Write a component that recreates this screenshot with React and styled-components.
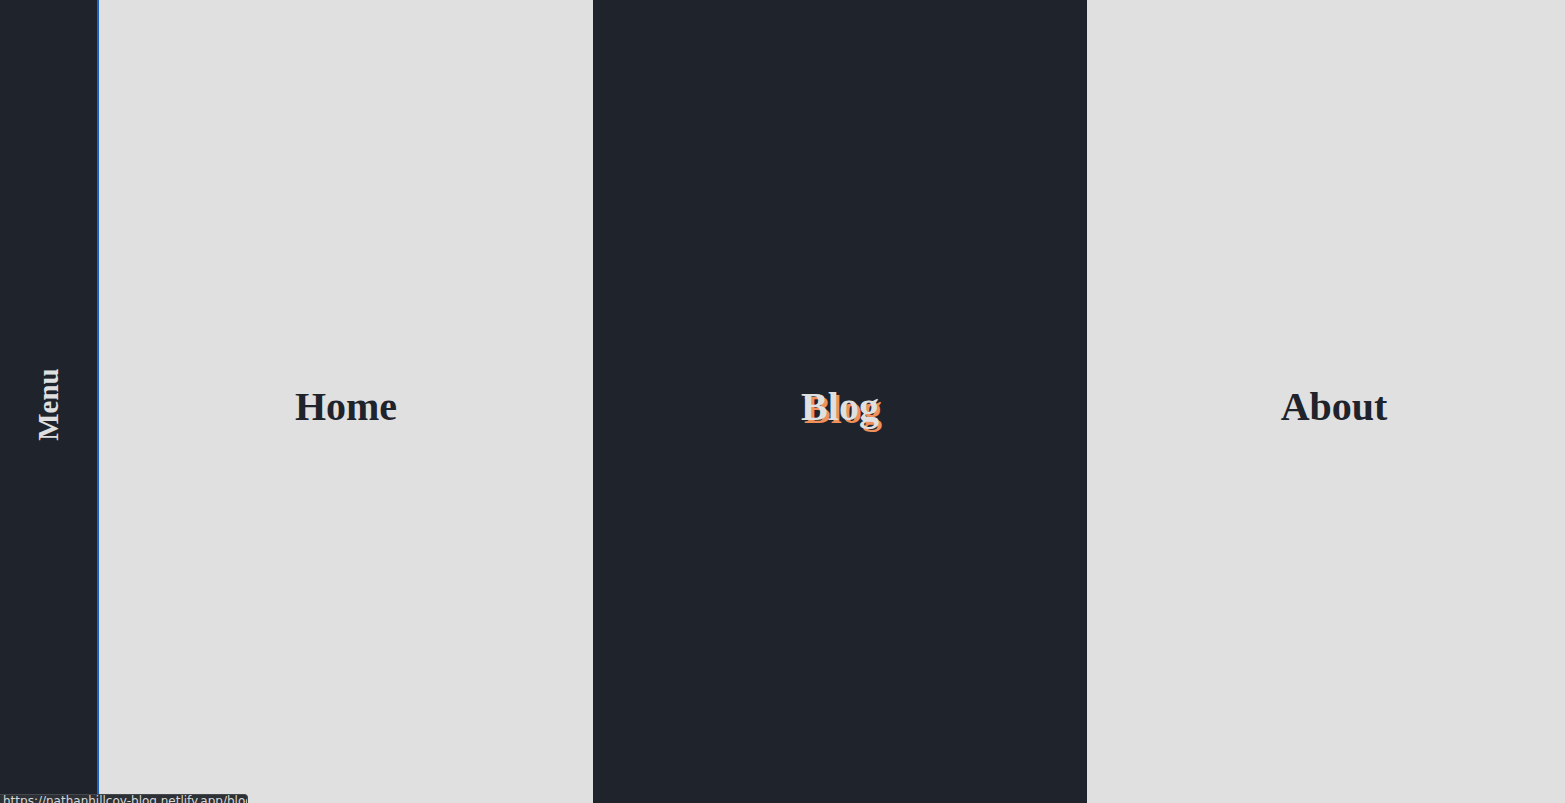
import React from 'react';
import styled, { createGlobalStyle } from 'styled-components';

const GlobalStyle = createGlobalStyle`
  html, body {
    margin: 0;
    padding: 0;
    height: 100%;
    overflow: hidden;
    background: #1f232b;
  }
  #root {
    height: 100%;
  }
`;

const links = [
  { label: 'Home', dark: false, active: false },
  { label: 'Blog', dark: true, active: true },
  { label: 'About', dark: false, active: false },
];

export default function App() {
  return (
    <>
      <GlobalStyle />
      <Page>
        <Sidebar>
          <MenuLabel>Menu</MenuLabel>
        </Sidebar>
        <Columns>
          {links.map(link => (
            <Column key={link.label} $dark={link.dark}>
              <ColumnTitle $dark={link.dark} $active={link.active}>
                {link.label}
              </ColumnTitle>
            </Column>
          ))}
        </Columns>
        <StatusBar>https://nathanhillcoy-blog.netlify.app/blog</StatusBar>
      </Page>
    </>
  );
}

const Page = styled.div`
  position: relative;
  display: flex;
  height: 100vh;
  width: 100vw;
  overflow: hidden;
  font-family: 'Liberation Serif', 'DejaVu Serif', serif;
`;

const Sidebar = styled.aside`
  flex: 0 0 97px;
  display: flex;
  align-items: center;
  justify-content: center;
  background: #1f232b;
  border-right: 2px solid #1a63c4;
`;

const MenuLabel = styled.span`
  display: block;
  transform: rotate(-90deg);
  font-size: 29px;
  font-weight: 700;
  color: #e0e0e0;
  margin-top: 6px;
  white-space: nowrap;
`;

const Columns = styled.div`
  flex: 0 0 auto;
  display: grid;
  grid-template-columns: repeat(3, 494px);
`;

const Column = styled.div`
  display: flex;
  align-items: center;
  justify-content: center;
  background: ${({ $dark }) => ($dark ? '#1f232b' : '#e0e0e0')};
`;

const ColumnTitle = styled.a`
  font-size: 40px;
  font-weight: 700;
  margin-top: 10px;
  color: ${({ $dark }) => ($dark ? '#e0e0e0' : '#1f232b')};
  text-shadow: ${({ $active }) => ($active ? '3px 3px 0 #f0905a' : 'none')};
  text-decoration: none;
  cursor: pointer;
`;

const StatusBar = styled.div`
  position: absolute;
  left: 0;
  bottom: -4px;
  width: 248px;
  height: 13px;
  padding: 0 3px;
  box-sizing: border-box;
  background: #2d3035;
  border: 1px solid #44474c;
  border-left: none;
  border-top-right-radius: 4px;
  color: #d8d8d8;
  font-family: 'DejaVu Sans', 'Liberation Sans', sans-serif;
  font-size: 12px;
  line-height: 13px;
  white-space: nowrap;
  overflow: hidden;
`;
